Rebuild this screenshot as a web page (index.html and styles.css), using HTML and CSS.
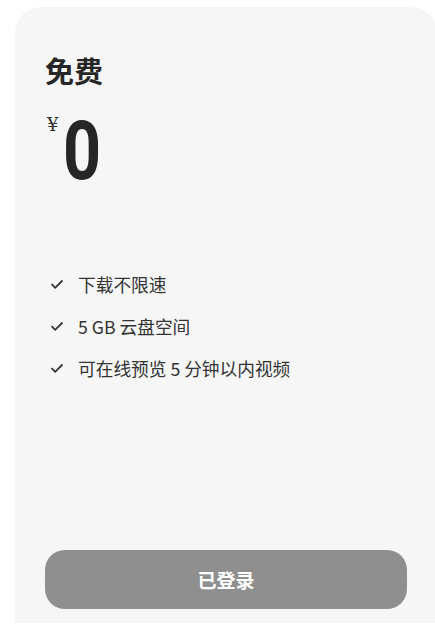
FILE: index.html
```
<!DOCTYPE html>
<html lang="zh-CN">
<head>
  <meta charset="UTF-8">
  <title>免费</title>
  <link rel="stylesheet" href="styles.css">
</head>
<body>
  <div class="plan">
    <h2 class="plan__title">免费</h2>
    <div class="plan__price">
      <span class="plan__currency">¥</span>
      <span class="plan__amount">0</span>
    </div>
    <ul class="plan__features">
      <li class="plan__feature">
        <svg class="plan__check" viewBox="0 0 16 16" width="16" height="16"><path d="M2.5 8.2 L6.2 11.8 L13.5 4.5" fill="none" stroke="#333" stroke-width="1.8"/></svg>
        下载不限速
      </li>
      <li class="plan__feature">
        <svg class="plan__check" viewBox="0 0 16 16" width="16" height="16"><path d="M2.5 8.2 L6.2 11.8 L13.5 4.5" fill="none" stroke="#333" stroke-width="1.8"/></svg>
        5 GB 云盘空间
      </li>
      <li class="plan__feature">
        <svg class="plan__check" viewBox="0 0 16 16" width="16" height="16"><path d="M2.5 8.2 L6.2 11.8 L13.5 4.5" fill="none" stroke="#333" stroke-width="1.8"/></svg>
        可在线预览 5 分钟以内视频
      </li>
    </ul>
    <button class="plan__button">已登录</button>
  </div>
</body>
</html>
```

FILE: styles.css
```
body, html {
  margin: 0;
  overflow: hidden;
  background: #fff;
}

body {
  font-family: "Noto Sans CJK SC", "Noto Sans", sans-serif;
  color: #262626;
}

.plan {
  box-sizing: border-box;
  margin: 7px 0 0 15px;
  width: 422px;
  height: 616px;
  padding: 43px 30px 14px;
  background: #f6f6f6;
  border-radius: 26px 26px 0 0;
  display: flex;
  flex-direction: column;
}

.plan__title {
  margin: 0;
  font-size: 29px;
  line-height: 40px;
  font-weight: 700;
}

.plan__price {
  display: flex;
  align-items: flex-start;
  margin-top: 21px;
  height: 82px;
}

.plan__currency {
  font-family: "DejaVu Serif", serif;
  font-size: 18px;
  line-height: 18px;
  margin: 5px 5px 0 2px;
  color: #333;
}

.plan__amount {
  font-family: Roboto, sans-serif;
  font-weight: 700;
  font-size: 81px;
  line-height: 82px;
  transform: scaleX(0.82);
  transform-origin: left;
}

.plan__features {
  list-style: none;
  margin: 79px 0 0;
  padding: 0;
  display: flex;
  flex-direction: column;
  gap: 18px;
}

.plan__feature {
  display: flex;
  align-items: center;
  gap: 13px;
  font-size: 17.7px;
  line-height: 24px;
  color: #333;
}

.plan__check {
  margin-left: 4px;
}

.plan__button {
  margin-top: auto;
  height: 59px;
  border: 0;
  border-radius: 20px;
  background: #8f8f8f;
  color: #fff;
  font-family: inherit;
  font-size: 19px;
  font-weight: 700;
}
```
